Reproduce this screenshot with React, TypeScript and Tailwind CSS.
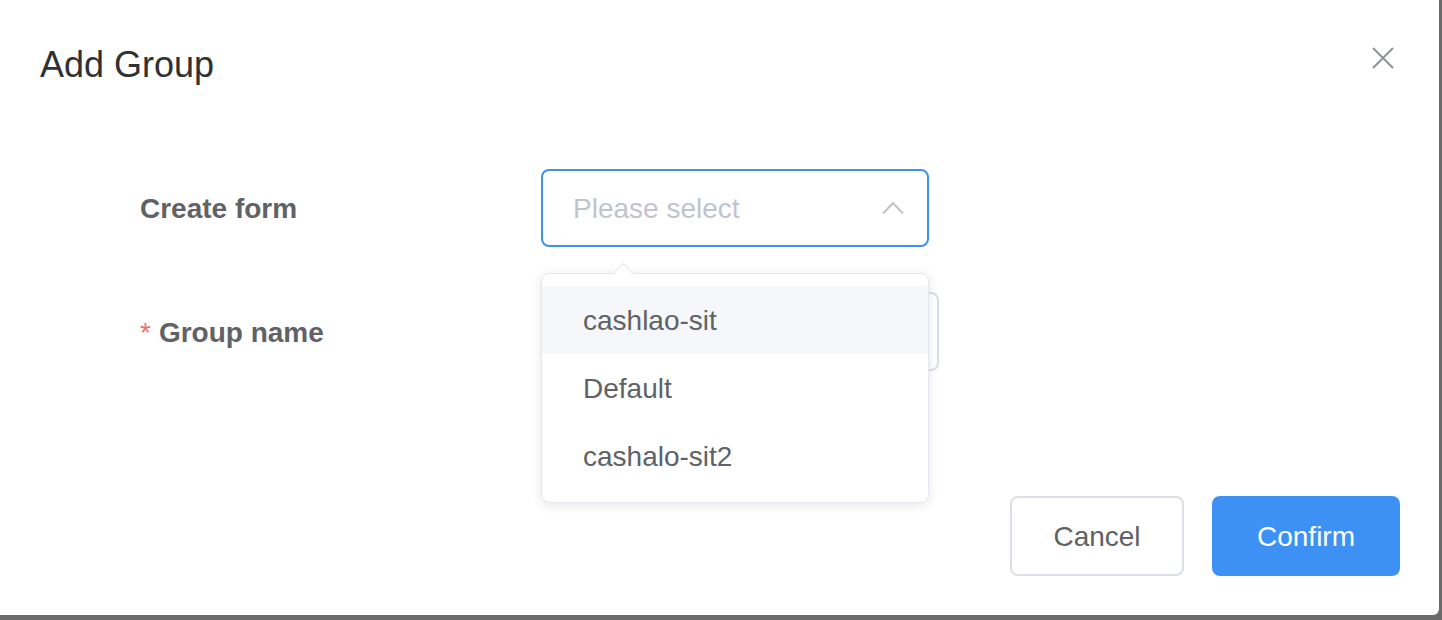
import React from "react";

const font = { fontFamily: '"Liberation Sans", Arial, sans-serif' };

export default function App() {
  return (
    <div className="w-[1442px] h-[620px] bg-[#6b6b6b] overflow-hidden" style={font}>
      <div className="relative flex flex-col w-[1439px] h-[615px] bg-white rounded-br-[6px]">
        {/* Header */}
        <div className="flex items-start justify-between pt-[40px] pl-[40px] pr-[45px]">
          <div className="h-[48px] leading-[48px] text-[36px] text-[#303133] pt-[1px]">Add Group</div>
          <button className="mt-[7px] w-[22px] h-[22px] flex items-center justify-center">
            <svg width="22" height="22" viewBox="0 0 22 22" fill="none">
              <path d="M1 1 L21 21 M21 1 L1 21" stroke="#909399" strokeWidth="2" />
            </svg>
          </button>
        </div>

        {/* Body */}
        <div className="flex flex-col pl-[140px] pt-[81px] gap-[45px]">
          <div className="flex items-center h-[78px]">
            <div className="w-[401px] text-[28px] font-bold text-[#606266] pt-[2px]">Create form</div>
            <div className="relative">
              <div className="w-[388px] h-[78px] border-2 border-[#3e91f4] rounded-[8px] flex items-center justify-between pl-[30px] pr-[23px]">
                <span className="text-[28px] text-[#c0c4cc] pt-[2px]">Please select</span>
                <svg width="22" height="14" viewBox="0 0 22 14" fill="none">
                  <path d="M1 12.5 L11 2 L21 12.5" stroke="#c0c4cc" strokeWidth="2" />
                </svg>
              </div>
              {/* Dropdown */}
              <div className="absolute z-10 left-0 top-[104px] w-[388px]">
                <div className="absolute left-[75px] top-[-7px] w-[14px] h-[14px] bg-white border-l border-t border-[#e4e7ed] rotate-45 z-20" />
                <div className="relative bg-white border border-[#e4e7ed] rounded-[8px] shadow-[0_2px_12px_0_rgba(0,0,0,0.1)] py-[12px]">
                  <div className="h-[68px] flex items-center pl-[41px] pt-[2px] bg-[#f5f7fa] text-[28px] text-[#606266]">cashlao-sit</div>
                  <div className="h-[68px] flex items-center pl-[41px] pt-[2px] text-[28px] text-[#606266]">Default</div>
                  <div className="h-[68px] flex items-center pl-[41px] pt-[2px] text-[28px] text-[#606266]">cashalo-sit2</div>
                </div>
              </div>
            </div>
          </div>
          <div className="flex items-center h-[79px]">
            <div className="w-[401px] text-[28px] font-bold text-[#606266] pt-[2px]">
              <span className="text-[#f56c6c] font-normal mr-[8px]">*</span>Group name
            </div>
            <div className="w-[398px] h-[79px] border-2 border-[#dcdfe6] rounded-[8px]" />
          </div>
        </div>

        {/* Footer */}
        <div className="flex justify-end gap-[28px] pr-[39px] mt-[125px]">
          <button className="w-[174px] h-[80px] border-2 border-[#dcdfe6] rounded-[8px] text-[28px] text-[#606266] bg-white pt-[2px]">Cancel</button>
          <button className="w-[188px] h-[80px] rounded-[8px] text-[28px] text-white bg-[#3e91f4] pt-[2px]">Confirm</button>
        </div>
      </div>
    </div>
  );
}
